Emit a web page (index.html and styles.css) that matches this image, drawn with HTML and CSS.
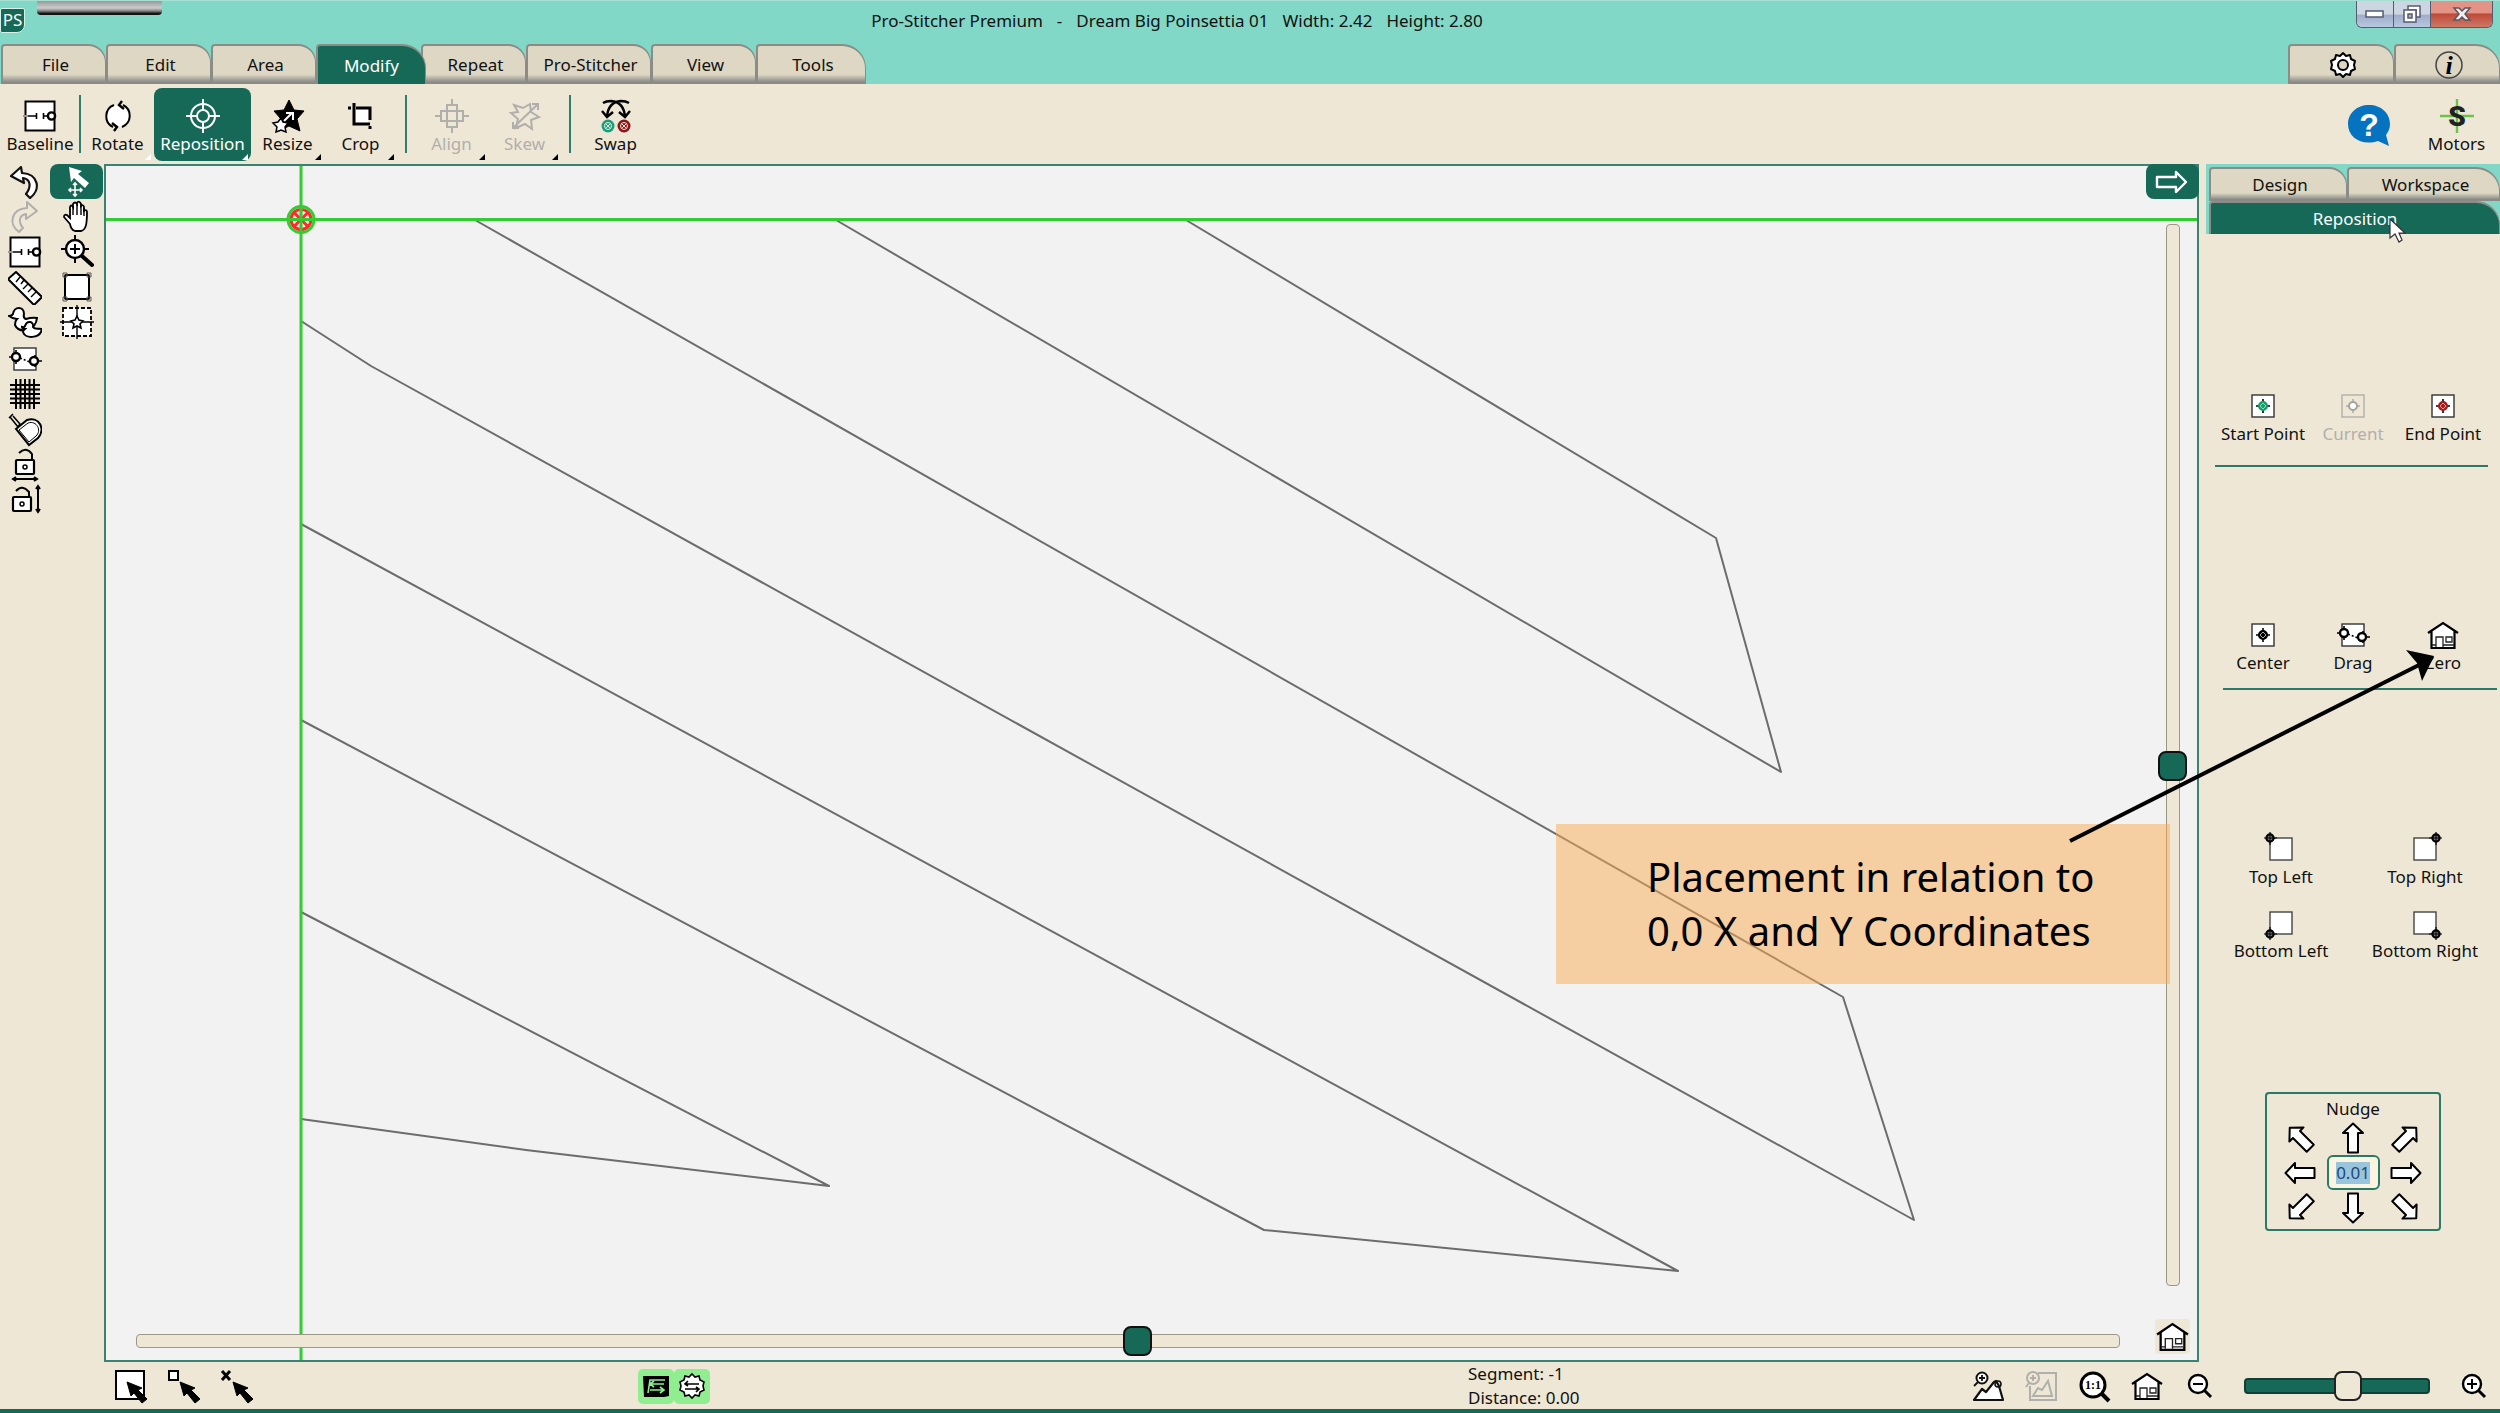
FILE: index.html
```html
<!DOCTYPE html>
<html lang="en">
<head>
    <meta charset="UTF-8">
    <meta name="viewport" content="width=device-width, initial-scale=1.0">
    <title>Pro-Stitcher Premium</title>
    <link rel="stylesheet" href="styles.css">
</head>
<body>
    <svg class="sprite" aria-hidden="true">
        <symbol id="i-baseline" viewBox="0 0 34 34">
            <rect x="2.5" y="2.5" width="29" height="29" fill="#fff" stroke="#000" stroke-width="2"/>
            <path d="M0 17h5" stroke="#999" stroke-width="2"/>
            <path d="M5 17h8M13.5 14v6M20.500 14v6M21 17h4" stroke="#000" stroke-width="1.600"/>
            <circle cx="28.500" cy="17" r="3.600" fill="#fff" stroke="#000" stroke-width="2.400"/>
        </symbol>
        <symbol id="i-rotate" viewBox="0 0 34 34">
            <circle cx="17" cy="17" r="11" fill="#fff"/>
            <path d="M12 28A12 12 0 0 1 13 6" fill="none" stroke="#000" stroke-width="2"/>
            <path d="M22 6A12 12 0 0 1 21 28" fill="none" stroke="#000" stroke-width="2"/>
            <path d="M21 2l-3 4 5 4M13 32l3-4-5-4" fill="none" stroke="#000" stroke-width="2.400"/>
        </symbol>
        <symbol id="i-reposition" viewBox="0 0 34 34">
            <g fill="none" stroke="#fff" stroke-width="2">
                <circle cx="17" cy="17" r="12"/><circle cx="17" cy="17" r="6"/>
                <path d="M17 0v11M17 23v11M0 17h11M23 17h11"/>
            </g>
        </symbol>
        <symbol id="i-resize" viewBox="0 0 34 34">
            <path d="M18 1l5 10 10 1-7 8 3 12-11-5-10 5 2-12-7-8 10-1z" fill="#000" stroke="#000" stroke-linejoin="round"/>
            <path d="M13 22l8-8M15 14h7v7" fill="none" stroke="#fff" stroke-width="2"/>
            <path d="M10 19l2 4 5 1-3 4 1 5-5-2-5 2 1-5-4-4 5-1z" fill="#fff" stroke="#000" stroke-width="1.500"/>
        </symbol>
        <symbol id="i-crop" viewBox="0 0 34 34">
            <path d="M10 8h14v16H10z" fill="#fff"/>
            <path d="M10 4v21h16M12 9h14v12M26 27v3M4 9h3" fill="none" stroke="#000" stroke-width="3"/>
        </symbol>
        <symbol id="i-align" viewBox="0 0 34 34">
            <g fill="none" stroke="#b1afab" stroke-width="2"><rect x="12" y="6" width="10" height="22"/><rect x="6" y="12" width="22" height="10"/><path d="M17 0v6M17 28v6M0 17h6M28 17h6"/></g>
        </symbol>
        <symbol id="i-skew" viewBox="0 0 34 34">
            <g fill="none" stroke="#b1afab" stroke-width="2"><path d="M6 6l9 3 7-4 1 8 8 5-8 3 1 9-7-5-9 4 2-9-7-6 7-1z"/><path d="M5 29L30 5M24 5h6v6M5 23v6h6"/></g>
        </symbol>
        <symbol id="i-swap" viewBox="0 0 34 34">
            <g fill="none" stroke="#000" stroke-width="2.400"><path d="M4 4q3-2 8-2 13 1 14 16M30 4q-3-2-8-2-13 1-14 16M3 12l5 6 6-5M20 13l6 5 5-6"/></g>
            <circle cx="9" cy="27" r="6.500" fill="#14a07e"/><circle cx="25" cy="27" r="6.500" fill="#8c1519"/>
            <g fill="none" stroke="#eee7d5"><circle cx="9" cy="27" r="3.500"/><circle cx="25" cy="27" r="3.500"/><path d="M7 25l4 4M11 25l-4 4M23 25l4 4M27 25l-4 4"/></g>
        </symbol>
        <symbol id="i-undo" viewBox="0 0 34 34">
            <path d="M13 2L3 11l13 7-1-5c7 1 9 8 3 16l4 4c11-8 9-24-8-25z" fill="#fff" stroke="currentColor" stroke-width="2.200" stroke-linejoin="round"/>
        </symbol>
        <symbol id="i-redo" viewBox="0 0 34 34">
            <path d="M19 2l10 9-11 8v-5c-7 1-8 8-3 14l-4 4C0 24 3 9 19 8z" fill="none" stroke="currentColor" stroke-width="2" stroke-linejoin="round"/>
        </symbol>
        <symbol id="i-ruler" viewBox="0 0 34 34">
            <path d="M8 1L34 26l-8 8L0 8z" fill="#fff" stroke="#000" stroke-width="2" stroke-linejoin="round"/>
            <path d="M12 6l-4 5M16 9l-3 4M20 13l-5 5M24 17l-4 4M28 21l-5 5" stroke="#000" stroke-width="1.400"/>
        </symbol>
        <symbol id="i-ducks" viewBox="0 0 34 34">
            <path d="M1 10q3 0 4-2c1-8 11-8 11 0q-1 4 2 5 6-2 11-1-1 9-9 12-10 2-13-5 0-4 2-6-4 0-8-3z" fill="#fff" stroke="#000" stroke-width="2"/>
            <path d="M14 21q2 1 3-1c2-6 9-5 8 1 2 3 6 1 9 2-2 10-17 10-19 3 0-2 1-2 2-3-2 0-3-1-3-2z" fill="#fff" stroke="#000" stroke-width="2"/>
        </symbol>
        <symbol id="i-drag" viewBox="0 0 34 34">
            <rect x="6" y="6" width="22" height="22" fill="#fff" stroke="#333" stroke-width="1.400"/>
            <path d="M1 15h4M8 8v14M27 13v12M28 19h6" stroke="#000" stroke-width="1.600"/>
            <path d="M12 16l10 4" stroke="#000" stroke-width="1.600" stroke-dasharray="2 2"/>
            <circle cx="8" cy="15" r="4" fill="#fff" stroke="#000" stroke-width="2.400"/><circle cx="26" cy="19" r="4" fill="#fff" stroke="#000" stroke-width="2.400"/>
        </symbol>
        <symbol id="i-grid" viewBox="0 0 34 34">
            <path d="M8 2v30M12.500 2v30M17 2v30M21.500 2v30M26 2v30M2 8h30M2 12.500h30M2 17h30M2 21.500h30M2 26h30" stroke="#000" stroke-width="2"/>
        </symbol>
        <symbol id="i-tape" viewBox="0 0 34 34">
            <path d="M8 16l11-9C31 3 38 16 30 25l-9 7z" fill="#fff" stroke="#000" stroke-width="2"/>
            <path d="M11 17l9-7c9-3 14 8 8 13l-7 6z" fill="none" stroke="#000"/>
            <path d="M1 5l4-4M2 4l8 10 2-3L5 3" fill="none" stroke="#000" stroke-width="1.600"/>
        </symbol>
        <symbol id="i-lock-x" viewBox="0 0 34 34">
            <path d="M11 5q7-7 13 1v6" fill="none" stroke="#000" stroke-width="2"/>
            <rect x="8" y="12" width="18" height="14" rx="1" fill="#fff" stroke="#000" stroke-width="2.200"/>
            <circle cx="17" cy="19" r="2" fill="none" stroke="#000" stroke-width="1.500"/>
            <path d="M6 31h22M8 29l-3 2 3 2M26 29l3 2-3 2" fill="none" stroke="#000" stroke-width="2"/>
        </symbol>
        <symbol id="i-lock-y" viewBox="0 0 34 34">
            <path d="M8 8q6-7 13 1v6" fill="none" stroke="#000" stroke-width="2"/>
            <rect x="5" y="14" width="18" height="14" rx="1" fill="#fff" stroke="#000" stroke-width="2.200"/>
            <circle cx="14" cy="21" r="2" fill="none" stroke="#000" stroke-width="1.500"/>
            <path d="M30 4v24M28 6l2-3 2 3M28 26l2 3 2-3" fill="none" stroke="#000" stroke-width="2"/>
        </symbol>
        <symbol id="i-move" viewBox="0 0 34 34">
            <path d="M9 2l13 4-4 3 11 9-4 5-11-10-3 4z" fill="#fff"/>
            <path d="M15 18v13M9 25h13M13 20l2-2 2 2M13 29l2 2 2-2M11 23l-2 2 2 2M20 23l2 2-2 2" fill="none" stroke="#fff" stroke-width="1.600"/>
        </symbol>
        <symbol id="i-hand" viewBox="0 0 34 34">
            <path d="M10 24L4 17q0-3 3-2l3 3V7q1-3 3 0V4q2-3 4 0V3q2-3 4 1v2q2-2 3 1v4q3-2 3 1c0 12-1 18-6 19h-6q-4-1-5-7z" fill="#fff" stroke="#000" stroke-width="1.800"/>
            <path d="M13 6v9M17 4v11M21 5v10M24 8v8" stroke="#000" stroke-width="1.400"/>
        </symbol>
        <symbol id="i-zoom-tool" viewBox="0 0 34 34">
            <circle cx="15" cy="14" r="9" fill="#fff" stroke="#000" stroke-width="2.400"/>
            <path d="M15 0v6M15 22v6M1 14h6M23 14h6M15 9v10M10 14h10" stroke="#000" stroke-width="2"/>
            <path d="M22 21l10 9" stroke="#000" stroke-width="4" stroke-linecap="round"/>
        </symbol>
        <symbol id="i-box" viewBox="0 0 34 34">
            <rect x="5" y="5" width="24" height="24" rx="1" fill="#fff" stroke="#000" stroke-width="2"/>
            <path d="M3 3h4v4H3zM27 3h4v4h-4zM3 27h4v4H3zM27 27h4v4h-4z" fill="none" stroke="#555"/>
        </symbol>
        <symbol id="i-star-box" viewBox="0 0 34 34">
            <rect x="3" y="3" width="28" height="28" fill="#fff" stroke="#000" stroke-width="1.800" stroke-dasharray="4 2"/>
            <path d="M17 0v34M0 17h34" stroke="#000" stroke-width="1.400"/>
            <path d="M17 11l2 4 4 1-3 3 1 4-4-2-4 2 1-4-3-3 4-1z" fill="#fff" stroke="#000" stroke-width="1.600"/>
        </symbol>
        <symbol id="i-point" viewBox="0 0 34 34">
            <rect x="6" y="6" width="22" height="22" fill="var(--box, #fff)" stroke="var(--edge, #333)" stroke-width="1.400"/>
            <path d="M17 10v14M10 17h14" stroke="var(--edge, #000)" stroke-width="1.600"/>
            <circle cx="17" cy="17" r="4" fill="var(--dot, #000)" stroke="var(--ring, #000)" stroke-width="2"/>
            <path d="M17 14l3 3-3 3-3-3z" fill="none" stroke="var(--in, #aaa)"/>
        </symbol>
        <symbol id="i-home" viewBox="0 0 34 34">
            <path d="M17 5L4 14v0h2v16h23V14h2z" fill="#fff"/>
            <path d="M2 15L17 5l15 10M5.500 13v17h23V13" fill="none" stroke="#000" stroke-width="2.200"/>
            <path d="M10 29V19h7v10M20 19h6v5h-6zM17 27h11M6 27h4" fill="none" stroke="#222" stroke-width="1.300"/>
        </symbol>
        <symbol id="i-corner" viewBox="0 0 34 34">
            <rect x="6" y="6" width="22" height="22" fill="#fff" stroke="#444" stroke-width="1.400"/>
            <path d="M6 0v13M0 6h13" stroke="#000" stroke-width="1.200"/>
            <circle cx="6" cy="6" r="3.600" fill="#777" stroke="#000" stroke-width="2.200"/>
            <path d="M6 3v6M3 6h6" stroke="#000"/>
        </symbol>
        <symbol id="i-arrow" viewBox="0 0 34 34">
            <path d="M17 2.500L27 12h-5v19.500H12V12H7z" fill="#fff" stroke="#000" stroke-width="2" stroke-linejoin="round"/>
        </symbol>
        <symbol id="i-pointer" viewBox="0 0 34 34">
            <path d="M10 12l15 6-4 2 9 9-5 4-8-10-3 3z" fill="#000" stroke="#000" stroke-linejoin="round"/>
        </symbol>
        <symbol id="i-lens" viewBox="0 0 34 34">
            <circle cx="15" cy="15" r="9" fill="#fff" stroke="#000" stroke-width="2.400"/><path d="M21 21l7 7" stroke="#000" stroke-width="3"/><path d="M10 15h10" stroke="#000" stroke-width="2"/>
        </symbol>
        <symbol id="i-peaks" viewBox="0 0 34 34">
            <path d="M3 31l8-11 4 3 8-10 2-1 3 5 4 14z" fill="var(--box, #fff)" stroke="currentColor" stroke-width="2.200" stroke-linejoin="round"/>
            <circle cx="11" cy="9" r="5.500" fill="var(--box, #fff)" stroke="currentColor" stroke-width="2"/><path d="M8 9h6M11 6v6M7 13l-4 4" stroke="currentColor" stroke-width="1.800"/>
            <circle cx="27" cy="15" r="3" fill="none" stroke="currentColor" stroke-width="1.600"/>
        </symbol>
    </svg>

    <header class="titlebar">
        <div class="logo"><span>PS</span></div>
        <div class="handle"></div>
        <h1 class="title">
            <span>Pro-Stitcher Premium</span><span>-</span><span>Dream Big Poinsettia 01</span><span>Width: 2.42</span><span>Height: 2.80</span>
        </h1>
        <div class="window-buttons">
            <button aria-label="Minimize"><svg width="20" height="10" viewBox="0 0 20 10"><rect x="1" y="2" width="17" height="6" fill="#fff" stroke="#555b70" stroke-width="1.500"/></svg></button>
            <button aria-label="Restore"><svg width="20" height="20" viewBox="0 0 20 20"><path d="M6 2h12v11h-4V6H6z" fill="#fff" stroke="#555b70" stroke-width="1.500"/><rect x="2" y="6" width="12" height="12" fill="#fff" stroke="#555b70" stroke-width="1.500"/><rect x="6" y="10" width="4" height="4" fill="#aab6cf" stroke="#555b70" stroke-width="1.500"/></svg></button>
            <button class="close" aria-label="Close"><svg width="18" height="16" viewBox="0 0 18 16"><path d="M1 2h5l3 3 3-3h5l-5 6 5 6h-5l-3-3-3 3H1l5-6z" fill="#eee" stroke="#5d5560" stroke-width="1.500"/></svg></button>
        </div>
    </header>

    <nav class="tabs">
        <button class="tab">File</button>
        <button class="tab">Edit</button>
        <button class="tab">Area</button>
        <button class="tab active">Modify</button>
        <button class="tab">Repeat</button>
        <button class="tab wide">Pro-Stitcher</button>
        <button class="tab">View</button>
        <button class="tab last">Tools</button>
        <button class="tab icon-tab push" aria-label="Settings">
            <svg width="26" height="26" viewBox="0 0 26 26"><path d="M13 1l3 3 4-1 1 4 4 2-1 4 1 4-4 2-1 4-4-1-3 3-3-3-4 1-1-4-4-2 1-4-1-4 4-2 1-4 4 1z" fill="#fff" stroke="#000" stroke-width="2" stroke-linejoin="round"/><circle cx="13" cy="13" r="5" fill="#ddd7c4" stroke="#000" stroke-width="2"/></svg>
        </button>
        <button class="tab icon-tab last" aria-label="Information">
            <svg width="30" height="30" viewBox="0 0 30 30"><circle cx="15" cy="15" r="13" fill="none" stroke="#444" stroke-width="1.500"/><text x="15" y="24" class="info-letter">i</text></svg>
        </button>
    </nav>

    <div class="toolbar">
        <button class="tool first"><svg><use href="#i-baseline"/></svg>Baseline</button>
        <i class="sep tight"></i>
        <button class="tool more light"><svg><use href="#i-rotate"/></svg>Rotate</button>
        <button class="tool more active"><svg><use href="#i-reposition"/></svg>Reposition</button>
        <button class="tool more"><svg><use href="#i-resize"/></svg>Resize</button>
        <button class="tool more"><svg><use href="#i-crop"/></svg>Crop</button>
        <i class="sep"></i>
        <button class="tool more off"><svg><use href="#i-align"/></svg>Align</button>
        <button class="tool more off"><svg><use href="#i-skew"/></svg>Skew</button>
        <i class="sep"></i>
        <button class="tool"><svg><use href="#i-swap"/></svg>Swap</button>
        <button class="help" aria-label="Help">
            <svg width="42" height="42" viewBox="0 0 42 42"><path d="M21 0c12 0 21 8 21 19 0 5-2 8-4 11l3 11-11-5C14 41 0 33 0 19 0 8 9 0 21 0z" fill="#0673c0"/><text x="21" y="31" class="help-mark">?</text></svg>
        </button>
        <button class="tool motors"><svg viewBox="0 0 34 34"><path d="M17 0v34M0 17h34" stroke="#6cc24a" stroke-width="2.400"/><text x="17" y="27" class="motor-letter">S</text></svg>Motors</button>
    </div>

    <main class="main">
        <aside class="side">
            <div class="side-col">
                <button aria-label="Undo"><svg><use href="#i-undo"/></svg></button>
                <button class="off" aria-label="Redo"><svg><use href="#i-redo"/></svg></button>
                <button aria-label="Baseline"><svg><use href="#i-baseline"/></svg></button>
                <button aria-label="Ruler"><svg><use href="#i-ruler"/></svg></button>
                <button aria-label="Ducks"><svg><use href="#i-ducks"/></svg></button>
                <button aria-label="Drag"><svg><use href="#i-drag"/></svg></button>
                <button aria-label="Grid"><svg><use href="#i-grid"/></svg></button>
                <button aria-label="Measure"><svg><use href="#i-tape"/></svg></button>
                <button aria-label="Lock horizontal"><svg><use href="#i-lock-x"/></svg></button>
                <button aria-label="Lock vertical"><svg><use href="#i-lock-y"/></svg></button>
            </div>
            <div class="side-col second">
                <button class="active" aria-label="Select"><svg><use href="#i-move"/></svg></button>
                <button aria-label="Pan"><svg><use href="#i-hand"/></svg></button>
                <button aria-label="Zoom"><svg><use href="#i-zoom-tool"/></svg></button>
                <button aria-label="Box"><svg><use href="#i-box"/></svg></button>
                <button aria-label="Fit"><svg><use href="#i-star-box"/></svg></button>
            </div>
        </aside>

        <section class="canvas">
            <svg class="drawing" viewBox="106 166 2091 1194" preserveAspectRatio="xMinYMin slice">
                <g class="stitches">
                    <path d="M1186 220L1716 538L1781 772L836 220"/>
                    <path d="M475 220L1843 997L1914 1220L371 366L301 321"/>
                    <path d="M301 524L1678 1271L1264 1230L301 720"/>
                    <path d="M301 912L829 1186L526 1150L301 1119"/>
                </g>
                <circle cx="301" cy="219.5" r="10" fill="#f4e4dc" stroke="#ff2a2a" stroke-width="3"/>
                <path d="M294 212.500l14 14M308 212.500l-14 14" stroke="#ff2a2a" stroke-width="3"/>
                <circle cx="301" cy="219.5" r="13" class="axis"/>
                <path d="M301 166V1360M106 219.500H2197" class="axis"/>
            </svg>
            <button class="expand" aria-label="Expand panel"><svg width="34" height="24" viewBox="0 0 34 24"><path d="M2 7h19V2l10 10-10 10v-5H2z" fill="none" stroke="#fff" stroke-width="2.400" stroke-linejoin="round"/></svg></button>
            <input class="scroll scroll-y" type="range" min="0" max="1000" value="511" aria-label="Vertical position">
            <input class="scroll scroll-x" type="range" min="0" max="1000" value="505" aria-label="Horizontal position">
            <button class="home" aria-label="Home"><svg><use href="#i-home"/></svg></button>
            <div class="callout">
                <p>Placement in relation to<br>0,0 X and Y Coordinates</p>
                <svg class="callout-arrow" width="370" height="200" viewBox="0 0 370 200"><path d="M2 191L353 14" stroke="#000" stroke-width="4"/><path d="M366 6l-28-6 11 13 5 18z" fill="#000"/></svg>
            </div>
        </section>

        <aside class="panel">
            <div class="panel-tabs">
                <button class="tab">Design</button>
                <button class="tab last">Workspace</button>
                <button class="tab active last">Reposition
                    <svg class="cursor" width="18" height="26" viewBox="0 0 18 26"><path d="M1 1v19l5-4 4 8 3-2-3-7h6z" fill="#fff" stroke="#333" stroke-width="1.200"/></svg>
                </button>
            </div>
            <div class="group">
                <button class="tool start"><svg><use href="#i-point"/></svg>Start Point</button>
                <button class="tool off current"><svg><use href="#i-point"/></svg>Current</button>
                <button class="tool end"><svg><use href="#i-point"/></svg>End Point</button>
            </div>
            <hr>
            <div class="group middle">
                <button class="tool"><svg><use href="#i-point"/></svg>Center</button>
                <button class="tool"><svg><use href="#i-drag"/></svg>Drag</button>
                <button class="tool"><svg><use href="#i-home"/></svg>Zero</button>
            </div>
            <hr class="shifted">
            <div class="group corners">
                <button class="tool"><svg><use href="#i-corner"/></svg>Top Left</button>
                <button class="tool"><svg class="flip-x"><use href="#i-corner"/></svg>Top Right</button>
                <button class="tool"><svg class="flip-y"><use href="#i-corner"/></svg>Bottom Left</button>
                <button class="tool"><svg class="flip-xy"><use href="#i-corner"/></svg>Bottom Right</button>
            </div>
            <div class="nudge">
                <label for="nudge">Nudge</label>
                <div class="nudge-grid">
                    <button class="nw" aria-label="Up left"><svg><use href="#i-arrow"/></svg></button>
                    <button aria-label="Up"><svg><use href="#i-arrow"/></svg></button>
                    <button class="ne" aria-label="Up right"><svg><use href="#i-arrow"/></svg></button>
                    <button class="w" aria-label="Left"><svg><use href="#i-arrow"/></svg></button>
                    <input id="nudge" type="text" value="0.01">
                    <button class="e" aria-label="Right"><svg><use href="#i-arrow"/></svg></button>
                    <button class="sw" aria-label="Down left"><svg><use href="#i-arrow"/></svg></button>
                    <button class="s" aria-label="Down"><svg><use href="#i-arrow"/></svg></button>
                    <button class="se" aria-label="Down right"><svg><use href="#i-arrow"/></svg></button>
                </div>
            </div>
        </aside>
    </main>

    <footer class="statusbar">
        <div class="status-group">
            <button aria-label="Select all"><svg viewBox="0 0 34 34"><rect x="2" y="2" width="28" height="28" fill="#fff" stroke="#000" stroke-width="2"/><use href="#i-pointer" x="3" y="1" width="34" height="34"/></svg></button>
            <button aria-label="Select one"><svg viewBox="0 0 34 34"><rect x="2" y="2" width="9" height="9" fill="#fff" stroke="#000" stroke-width="2"/><use href="#i-pointer" x="3" y="1" width="34" height="34"/></svg></button>
            <button aria-label="Select none"><svg viewBox="0 0 34 34"><path d="M2 2l8 9M10 2l-8 9" stroke="#000" stroke-width="3"/><use href="#i-pointer" x="3" y="1" width="34" height="34"/></svg></button>
        </div>
        <div class="status-group green">
            <button aria-label="Machine"><svg viewBox="0 0 34 34"><path d="M4 7h26v20l-5 1H5z" fill="#000"/><path d="M9 24l2-13h15M11 15h14M15 12l-4 3 4 3M11 21h14M21 18l4 3-4 3" fill="none" stroke="#90ee90" stroke-width="1.600"/></svg></button>
            <button aria-label="Stitch regulation"><svg viewBox="0 0 34 34"><path d="M17 5l3 3 4-1 1 4 4 2-1 4 1 4-4 2-1 4-4-1-3 3-3-3-4 1-1-4-4-2 1-4-1-4 4-2 1-4 4 1z" fill="#fff" stroke="#000" stroke-width="1.600"/><path d="M10 15h14M13 12l-3 3 3 2M10 20h14M21 18l3 2-3 3" fill="none" stroke="#000" stroke-width="1.600"/></svg></button>
        </div>
        <div class="readout">
            <div>Segment: -1</div>
            <div>Distance: 0.00</div>
        </div>
        <div class="status-group">
            <button aria-label="Zoom selection"><svg><use href="#i-peaks"/></svg></button>
            <button class="off" aria-label="Zoom picture"><svg viewBox="0 0 34 34"><path d="M14 4h18v27H6V17" fill="none" stroke="#b1afab" stroke-width="2"/><circle cx="9" cy="9" r="6" fill="none" stroke="#b1afab" stroke-width="2"/><path d="M6 9h6M9 6v6M5 14l-3 4M9 27l5-8 4 2 6-9 4 15z" fill="none" stroke="#b1afab" stroke-width="2"/></svg></button>
            <button aria-label="Actual size"><svg viewBox="0 0 34 34"><circle cx="16" cy="16" r="12" fill="#fff" stroke="#000" stroke-width="3"/><path d="M25 25l7 7" stroke="#000" stroke-width="4"/><text x="16" y="20" class="ratio">1:1</text></svg></button>
            <button aria-label="Home view"><svg><use href="#i-home"/></svg></button>
            <button aria-label="Zoom out"><svg><use href="#i-lens"/></svg></button>
            <input class="zoom" type="range" min="0" max="100" value="57" aria-label="Zoom">
            <button aria-label="Zoom in"><svg viewBox="0 0 34 34"><use href="#i-lens"/><path d="M15 10v10" stroke="#000" stroke-width="2"/></svg></button>
        </div>
    </footer>

    <script>
        const nudge = document.getElementById('nudge');
        nudge.focus();
        nudge.select();
    </script>
</body>
</html>
```
FILE: styles.css
```css
* { margin: 0; padding: 0; box-sizing: border-box; }
body {
    min-height: 100vh;
    display: flex;
    flex-direction: column;
    background: #eee7d5;
    color: #111;
    font: 17px/22px "Noto Sans", "Open Sans", sans-serif;
    overflow: hidden;
}
button {
    font: inherit;
    color: inherit;
    background: none;
    border: none;
}
button svg { display: block; overflow: visible; }
.sprite { position: absolute; width: 0; height: 0; }
.off { color: #b1afab; }

/* title bar */
.titlebar {
    position: relative;
    display: flex;
    height: 44px;
    background: #81d8c6;
    border-top: 1px solid #a5e0d2;
}
.logo {
    width: 25px;
    height: 25px;
    margin: 7px 12px 0 0;
    background: #176957;
    border: 1px solid #d8f0e8;
    border-radius: 2px 2px 8px 2px;
    color: #fff;
    text-align: center;
}
.handle {
    width: 125px;
    height: 14px;
    background: linear-gradient(#999, #ccc 50%, #888 70%, #111 90%);
    border-radius: 0 0 4px 4px;
}
.title {
    flex: 1;
    display: flex;
    justify-content: center;
    gap: 14px;
    padding-right: 164px;
    font-size: 17px;
    font-weight: normal;
    line-height: 40px;
}
.window-buttons {
    display: flex;
    height: 27px;
    margin-right: 7px;
    border: 1px solid #555b70;
    border-top: none;
    border-radius: 0 0 6px 6px;
    overflow: hidden;
}
.window-buttons button {
    width: 37px;
    display: flex;
    align-items: center;
    justify-content: center;
    background: linear-gradient(#ccd5e2 50%, #9eadc9 55%, #b9c8e0);
    border-right: 1px solid #555b70;
}
.window-buttons .close {
    width: 61px;
    background: linear-gradient(#e49486 45%, #bf4a38 50%, #cf7866);
    border-right: none;
}

/* tabs */
.tabs {
    display: flex;
    height: 40px;
    padding-left: 1px;
    background: #81d8c6;
}
.tab {
    width: 105px;
    height: 40px;
    padding: 0 0 1px 3px;
    background: linear-gradient(#ddd7c4 75%, #8a8a86 95%);
    border: 2px solid #8c8c86;
    border-right-width: 1px;
    border-bottom: none;
    border-radius: 4px 18px 0 0;
}
.tab.wide { width: 125px; }
.tab.last { width: 110px; border-radius: 4px 24px 0 0; }
.tab.active {
    width: 110px;
    margin-right: -5px;
    background: #176957;
    color: #fff;
    border-radius: 4px 24px 0 0;
    position: relative;
    padding: 2px 0 0;
}
.icon-tab, .icon-tab.last {
    width: 106px;
    display: flex;
    align-items: center;
    justify-content: center;
}
.push { margin-left: auto; }
.info-letter { font: italic bold 26px "Liberation Serif", serif; text-anchor: middle; }

/* toolbar */
.toolbar {
    display: flex;
    height: 80px;
    padding: 4px 0 0 1px;
}
.tool {
    position: relative;
    display: flex;
    flex-direction: column;
    align-items: center;
    white-space: nowrap;
}
.tool svg { width: 34px; height: 34px; }
.toolbar .tool {
    width: 73px;
    height: 73px;
    padding-top: 11px;
}
.toolbar .first { width: 78px; }
.toolbar .active {
    width: 97px;
    background: #176957;
    color: #fff;
    border-radius: 8px;
}
.more::after {
    content: "";
    position: absolute;
    right: 3px;
    bottom: 1px;
    border: 3px solid transparent;
    border-right-color: #000;
    border-bottom-color: #000;
}
.more.light::after, .more.active::after { border-right-color: #fff; border-bottom-color: #fff; }
.sep {
    width: 2px;
    height: 58px;
    margin: 7px 8px 0;
    background: #2f7d6b;
}
.sep.tight { margin: 7px 0 0; }
.help { margin: 0 30px 0 auto; }
.help-mark { font: bold 32px "Liberation Sans", sans-serif; fill: #fff; text-anchor: middle; }
.toolbar .motors { margin-right: 7px; }
.motor-letter { font: 900 28px Roboto, sans-serif; fill: #222; text-anchor: middle; }

/* main area */
.main {
    flex: 1;
    display: grid;
    grid-template-columns: 104px 1fr 301px;
}
.side { display: flex; }
.side-col {
    width: 50px;
    height: 354px;
    display: flex;
    flex-direction: column;
    justify-content: space-between;
}
.side-col.second { width: 53px; justify-content: flex-start; }
.side button {
    height: 35px;
    display: flex;
    align-items: center;
    justify-content: center;
}
.side svg { width: 34px; height: 34px; }
.side .active { background: #176957; border-radius: 8px; }
.canvas {
    position: relative;
    background: #f2f2f2;
    border: 2px solid #3a8373;
}
.drawing {
    position: absolute;
    width: 100%;
    height: 100%;
}
.stitches { fill: none; stroke: #6c6c6c; stroke-width: 2; stroke-linejoin: round; }
.axis { fill: none; stroke: #33cc33; stroke-width: 3; }
.expand {
    position: absolute;
    top: -2px;
    right: -2px;
    width: 53px;
    height: 35px;
    padding-left: 9px;
    background: #176957;
    border-radius: 8px;
}
.scroll, .zoom {
    position: absolute;
    appearance: none;
    background: none;
}
.scroll-x { left: 30px; bottom: 4px; width: calc(100% - 107px); height: 30px; }
.scroll-y {
    top: 58px;
    right: 9px;
    width: 30px;
    height: calc(100% - 132px);
    writing-mode: vertical-lr;
}
.scroll::-webkit-slider-runnable-track {
    background: #eee7d5;
    border: 1px solid #9b9789;
    border-radius: 4px;
}
.scroll-x::-webkit-slider-runnable-track { height: 14px; }
.scroll-y::-webkit-slider-runnable-track { width: 14px; }
.scroll::-webkit-slider-thumb {
    appearance: none;
    width: 29px;
    height: 30px;
    background: #176957;
    border: 2px solid #111;
    border-radius: 8px;
}
.scroll-x::-webkit-slider-thumb { margin-top: -9px; }
.scroll-y::-webkit-slider-thumb { margin-left: -9px; }
.home {
    position: absolute;
    right: 7px;
    bottom: 6px;
    width: 35px;
    height: 35px;
    background: #eee7d5;
    border-radius: 4px;
}
.home svg { width: 35px; height: 35px; }

/* note over the canvas */
.callout {
    position: absolute;
    top: 658px;
    right: 27px;
    z-index: 2;
    width: 614px;
    padding: 26px 0 26px 91px;
    background: rgba(248, 170, 80, 0.5);
    color: #000;
    font-size: 40px;
    line-height: 54px;
}
.callout-arrow { position: absolute; left: 512px; top: -174px; pointer-events: none; }

/* right panel */
.panel { padding-left: 7px; }
.panel-tabs {
    display: flex;
    flex-wrap: wrap;
    padding: 3px 0 0 3px;
    background: #81d8c6;
}
.panel-tabs .tab { width: 138px; height: 34px; }
.panel-tabs .tab.last { flex: 1; }
.panel-tabs .tab.active { flex: 1 0 100%; height: 33px; margin: 0; padding: 0; }
.cursor { position: absolute; left: 178px; top: 15px; }
.group {
    display: grid;
    grid-template-columns: repeat(3, 90px);
    justify-content: center;
    padding: 155px 0 20px;
}
.group.middle { padding: 151px 0 14px; }
.panel hr {
    height: 2px;
    margin: 0 12px 0 9px;
    border: none;
    background: #2a7a67;
}
.panel .shifted { margin: 0 3px 0 17px; }
.start { --dot: #14a06c; --ring: #14a06c; --in: #8fd8b8; }
.end { --dot: #a51c1c; --ring: #a51c1c; --in: #dd9a9a; }
.current { --dot: #fff; --ring: #a5a39f; --edge: #b1afab; --box: #eee7d5; --in: none; }
.group.corners {
    grid-template-columns: repeat(2, 144px);
    row-gap: 18px;
    padding: 142px 0 130px;
}
.flip-x { transform: scaleX(-1); }
.flip-y { transform: scaleY(-1); }
.flip-xy { transform: scale(-1); }
.nudge {
    width: 176px;
    margin: 0 auto;
    padding: 4px 7px;
    border: 2px solid #2a7a67;
    border-radius: 4px;
    text-align: center;
}
.nudge label { display: block; }
.nudge-grid {
    display: grid;
    grid-template-columns: repeat(3, 53px);
    grid-auto-rows: 35px;
    justify-content: center;
}
.nudge-grid button { display: flex; align-items: center; justify-content: center; }
.nudge-grid svg { width: 34px; height: 34px; }
.nudge-grid input {
    width: 53px;
    background: #fbf4e0;
    border: 2px solid #2a7a67;
    border-radius: 6px;
    outline: none;
    color: #1d4a73;
    font: inherit;
    text-align: center;
}
.nudge-grid input::selection { background: #99c4de; color: #1d4a73; }
.nw svg { transform: rotate(-45deg); }
.ne svg { transform: rotate(45deg); }
.w svg { transform: rotate(-90deg); }
.e svg { transform: rotate(90deg); }
.sw svg { transform: rotate(-135deg); }
.s svg { transform: rotate(180deg); }
.se svg { transform: rotate(135deg); }

/* status bar */
.statusbar {
    display: grid;
    grid-template-columns: 534px 830px 1fr auto;
    height: 51px;
    padding-left: 104px;
    border-bottom: 4px solid #176957;
}
.status-group { display: flex; align-items: center; }
.status-group button {
    width: 53px;
    display: flex;
    justify-content: center;
}
.status-group svg { width: 34px; height: 34px; }
.status-group.green button {
    width: 36px;
    height: 35px;
    align-items: center;
    background: #90ee90;
    border-radius: 5px;
}
.readout { line-height: 24px; }
.ratio { font: bold 12px "Liberation Serif", serif; text-anchor: middle; }
.zoom {
    position: static;
    width: 186px;
    height: 30px;
    margin: 0 17px 0 18px;
}
.zoom::-webkit-slider-runnable-track {
    height: 16px;
    background: #176957;
    border: 2px solid #123f35;
    border-radius: 4px;
}
.zoom::-webkit-slider-thumb {
    appearance: none;
    width: 28px;
    height: 30px;
    margin-top: -9px;
    background: #eee7d5;
    border: 2px solid #222;
    border-radius: 8px;
}
```
